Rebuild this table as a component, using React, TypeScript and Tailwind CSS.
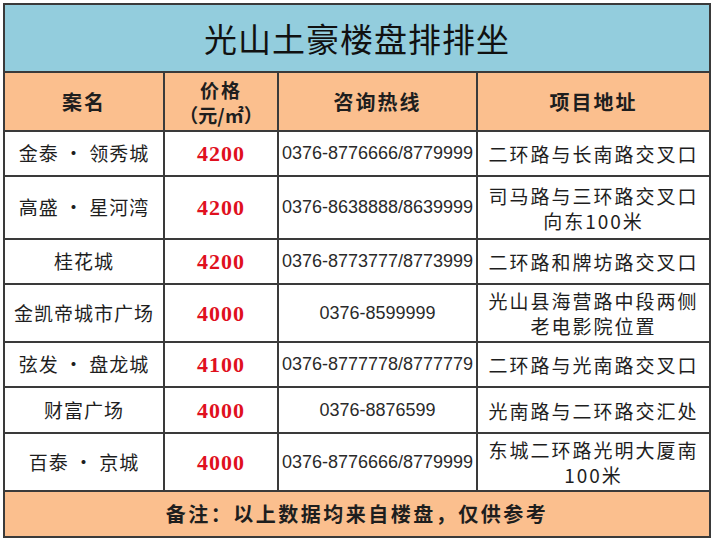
import React from "react"

const rows = [
  { name: "金泰 · 领秀城", price: "4200", phone: "0376-8776666/8779999", addr: ["二环路与长南路交叉口"], h: "h-[45px]" },
  { name: "高盛 · 星河湾", price: "4200", phone: "0376-8638888/8639999", addr: ["司马路与三环路交叉口", "向东100米"], h: "h-[63px]" },
  { name: "桂花城", price: "4200", phone: "0376-8773777/8773999", addr: ["二环路和牌坊路交叉口"], h: "h-[45px]" },
  { name: "金凯帝城市广场", price: "4000", phone: "0376-8599999", addr: ["光山县海营路中段两侧", "老电影院位置"], h: "h-[58px]" },
  { name: "弦发 · 盘龙城", price: "4100", phone: "0376-8777778/8777779", addr: ["二环路与光南路交叉口"], h: "h-[45px]" },
  { name: "财富广场", price: "4000", phone: "0376-8876599", addr: ["光南路与二环路交汇处"], h: "h-[46px]" },
  { name: "百泰 · 京城", price: "4000", phone: "0376-8776666/8779999", addr: ["东城二环路光明大厦南", "100米"], h: "h-[58px]" },
]

const cjk = "font-['Noto_Sans_CJK_SC',sans-serif]"
const cell = "border-2 border-[#3a3a3a] text-center align-middle p-0"

export default function App() {
  return (
    <div className="w-[713px] h-[540px] bg-white pt-[3px] pl-[3px]">
      <table className={`border-collapse table-fixed w-[706px] text-[#1e1e1e] ${cjk}`}>
        <colgroup>
          <col className="w-[160px]" />
          <col className="w-[114px]" />
          <col className="w-[199px]" />
          <col className="w-[233px]" />
        </colgroup>
        <tbody>
          <tr className="h-[68px]">
            <td colSpan={4} className={`${cell} bg-[#93cddd] text-[33px] leading-none tracking-[1px] text-[#111]`}>
              光山土豪楼盘排排坐
            </td>
          </tr>
          <tr className="h-[59px] bg-[#fbbf8e] font-bold text-[20px] leading-[25px]">
            <td className={`${cell} tracking-[2px]`}>案名</td>
            <td className={`${cell} text-[19px] leading-[25px]`}>
              <div className="tracking-[2px]">价格</div>
              <div>（元/㎡）</div>
            </td>
            <td className={`${cell} tracking-[2px]`}>咨询热线</td>
            <td className={`${cell} tracking-[2px]`}>项目地址</td>
          </tr>
          {rows.map((r, i) => (
            <tr key={i} className={r.h}>
              <td className={`${cell} text-[19px] tracking-[1px]`}>{r.name}</td>
              <td className={`${cell} font-['Liberation_Serif',serif] font-bold text-[22px] tracking-[1px] text-[#e0101e]`}>
                {r.price}
              </td>
              <td className={`${cell} font-['Liberation_Sans',sans-serif] text-[18px] text-[#2a2a2a] whitespace-nowrap`}>
                {r.phone}
              </td>
              <td className={`${cell} text-[19px] leading-[25px] tracking-[2px] whitespace-nowrap`}>
                {r.addr.map((a, j) => (
                  <div key={j}>{a}</div>
                ))}
              </td>
            </tr>
          ))}
          <tr className="h-[46px]">
            <td colSpan={4} className={`${cell} bg-[#fbbf8e] font-bold text-[20px] tracking-[2.5px]`}>
              备注：以上数据均来自楼盘，仅供参考
            </td>
          </tr>
        </tbody>
      </table>
    </div>
  )
}
